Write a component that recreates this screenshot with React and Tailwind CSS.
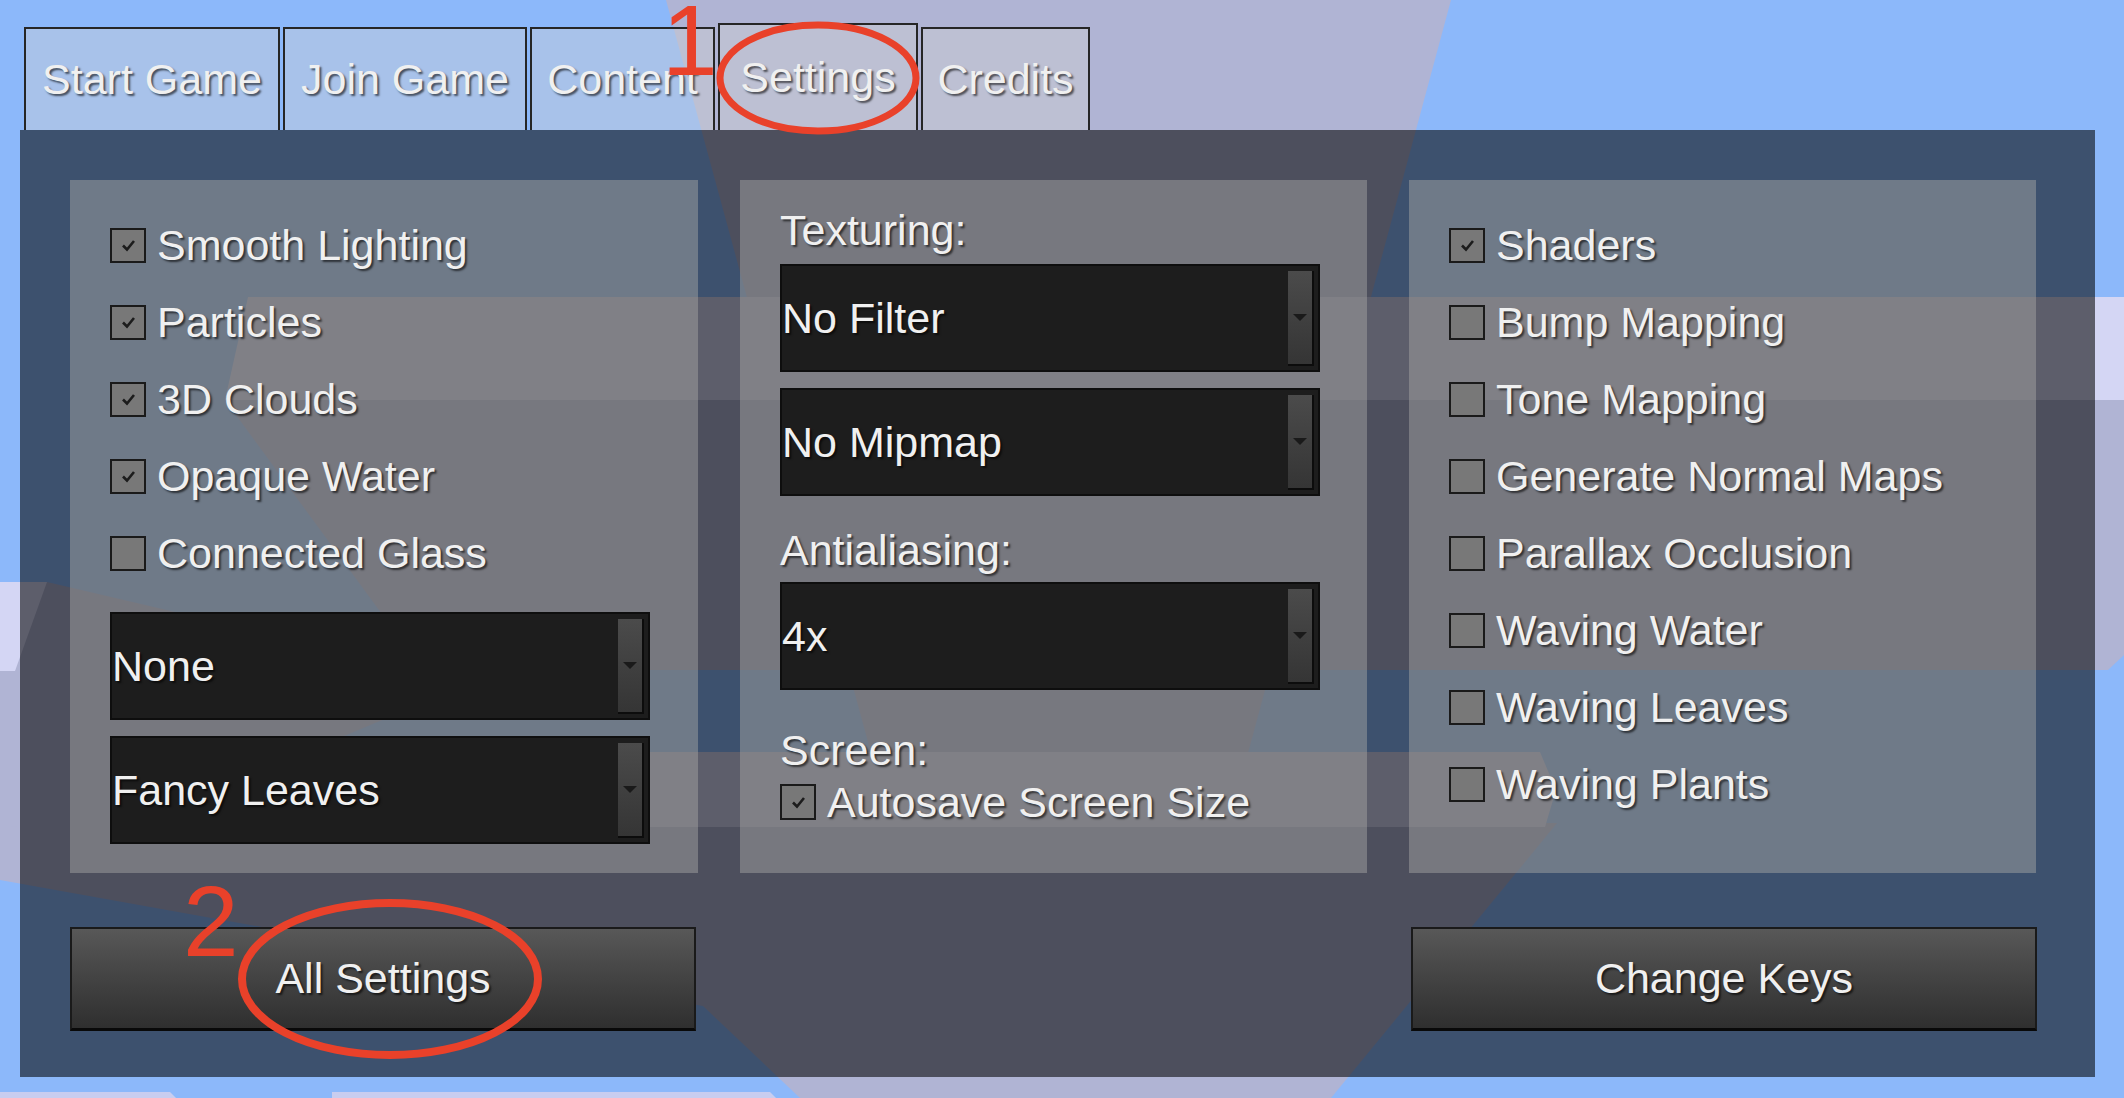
import React from 'react';

const shadow = '[text-shadow:2px_2px_2px_rgba(0,0,0,0.6)]';

const tabs = [
  { label: 'Start Game', w: 'w-[256px]' },
  { label: 'Join Game', w: 'w-[244px]' },
  { label: 'Content', w: 'w-[185px]' },
  { label: 'Settings', w: 'w-[200px]', active: true },
  { label: 'Credits', w: 'w-[169px]' },
];

const leftChecks = [
  { label: 'Smooth Lighting', on: true },
  { label: 'Particles', on: true },
  { label: '3D Clouds', on: true },
  { label: 'Opaque Water', on: true },
  { label: 'Connected Glass', on: false },
];

const rightChecks = [
  { label: 'Shaders', on: true },
  { label: 'Bump Mapping', on: false },
  { label: 'Tone Mapping', on: false },
  { label: 'Generate Normal Maps', on: false },
  { label: 'Parallax Occlusion', on: false },
  { label: 'Waving Water', on: false },
  { label: 'Waving Leaves', on: false },
  { label: 'Waving Plants', on: false },
];

function Backdrop() {
  return (
    <svg className="absolute inset-0" width="2124" height="1098" viewBox="0 0 2124 1098">
      {/* sun beam */}
      <polygon points="666,0 1451,0 1155,1098 965,1098" fill="#b0b4d4" />
      {/* grey clouds */}
      <polygon points="225,400 2124,400 2124,655 2108,670 423,670" fill="#b0b4d4" />
      <polygon points="0,671 47,582 430,672 430,700 0,880" fill="#b0b4d4" />
      <polygon points="0,827 1557,823 1331,1098 800,1098 703,1006 0,880" fill="#b0b4d4" />
      {/* bright clouds */}
      <polygon points="248,297 2124,297 2124,400 225,400" fill="#d4d6f4" />
      <polygon points="0,582 47,582 15,671 0,671" fill="#d4d6f4" />
      <polygon points="440,752 1540,752 1556,790 1545,827 420,827" fill="#d4d6f4" />
      <polygon points="0,1092 170,1092 176,1098 0,1098" fill="#c9cdef" />
      <polygon points="332,1092 770,1092 776,1098 332,1098" fill="#c9cdef" />
    </svg>
  );
}

function Checkbox({ on, big }) {
  return (
    <span
      className={`flex shrink-0 items-center justify-center border-2 border-[#1a1a1a] bg-[#787878] ${
        big ? 'h-[36px] w-[36px]' : 'h-[35px] w-[36px]'
      }`}
    >
      {on && (
        <svg width="15" height="13" viewBox="0 0 15 13">
          <path d="M2 6.5 L6 10.5 L13 2" fill="none" stroke="#1c1c1c" strokeWidth="2.6" />
        </svg>
      )}
    </span>
  );
}

function CheckRow({ label, on }) {
  return (
    <div className="flex h-[77px] items-center gap-[11px]">
      <Checkbox on={on} />
      <span className={shadow}>{label}</span>
    </div>
  );
}

function Dropdown({ value, className = '' }) {
  return (
    <div className={`flex h-[108px] w-[540px] border-2 border-[#0e0e0e] bg-[#1d1d1d] ${className}`}>
      <div className="flex flex-1 items-center">
        <span className={shadow}>{value}</span>
      </div>
      <div className="mb-[4px] mr-[4px] mt-[5px] flex w-[26px] items-center justify-center border-b-2 border-r-2 border-[#0c0c0c] bg-gradient-to-b from-[#4b4b4b] to-[#353535]">
        <svg width="14" height="7" viewBox="0 0 14 7">
          <path d="M0 0 L14 0 L7 7 Z" fill="#1a1a1a" />
        </svg>
      </div>
    </div>
  );
}

function Button({ label }) {
  return (
    <button className="flex h-[104px] w-[626px] items-center justify-center border-2 border-b-[3px] border-[#1a1a1a] border-b-[#090909] bg-gradient-to-b from-[#585858] to-[#2f2f2f]">
      <span className={shadow}>{label}</span>
    </button>
  );
}

export default function App() {
  return (
    <div className="relative h-[1098px] w-[2124px] overflow-hidden bg-[#8cb8fa] text-[43px] text-[#f0f0f0] [font-family:'Liberation_Sans',Arimo,sans-serif]">
      <Backdrop />

      <div className="relative pl-[20px] pt-[23px]">
        {/* Tabs */}
        <div className="ml-[4px] flex h-[107px] items-end gap-[3px]">
          {tabs.map((t) => (
            <div
              key={t.label}
              className={`flex items-center justify-center border-2 border-b-0 border-[#262626] bg-[rgba(210,210,210,0.4)] ${t.w} ${
                t.active ? 'h-[107px]' : 'h-[103px]'
              }`}
            >
              <span className={shadow}>{t.label}</span>
            </div>
          ))}
        </div>

        {/* Panel */}
        <div className="h-[947px] w-[2075px] bg-black/[0.56] pl-[50px] pt-[50px]">
          <div className="flex gap-[42px]">
            {/* Left column */}
            <div className="h-[693px] w-[628px] bg-[rgba(168,168,165,0.47)] px-[40px] pt-[27px]">
              {leftChecks.map((c) => (
                <CheckRow key={c.label} {...c} />
              ))}
              <Dropdown value="None" className="mt-[20px]" />
              <Dropdown value="Fancy Leaves" className="mt-[16px]" />
            </div>

            {/* Middle column */}
            <div className="h-[693px] w-[627px] bg-[rgba(168,168,165,0.47)] px-[40px] pt-[29px]">
              <div className={`leading-[42px] ${shadow}`}>Texturing:</div>
              <Dropdown value="No Filter" className="mt-[13px]" />
              <Dropdown value="No Mipmap" className="mt-[16px]" />
              <div className={`mt-[33px] leading-[42px] ${shadow}`}>Antialiasing:</div>
              <Dropdown value="4x" className="mt-[11px]" />
              <div className={`mt-[39px] leading-[42px] ${shadow}`}>Screen:</div>
              <div className="mt-[13px] flex h-[36px] items-center gap-[11px]">
                <Checkbox on big />
                <span className={shadow}>Autosave Screen Size</span>
              </div>
            </div>

            {/* Right column */}
            <div className="h-[693px] w-[627px] bg-[rgba(168,168,165,0.47)] px-[40px] pt-[27px]">
              {rightChecks.map((c) => (
                <CheckRow key={c.label} {...c} />
              ))}
            </div>
          </div>

          <div className="mt-[54px] flex w-[1967px] justify-between">
            <Button label="All Settings" />
            <Button label="Change Keys" />
          </div>
        </div>
      </div>

      {/* red annotations */}
      <svg className="pointer-events-none absolute inset-0" width="2124" height="1098" viewBox="0 0 2124 1098">
        <ellipse cx="818" cy="78" rx="98" ry="53" fill="none" stroke="#e9412a" strokeWidth="7" />
        <ellipse cx="390" cy="979" rx="148" ry="76" fill="none" stroke="#e9412a" strokeWidth="8" />
        <text x="662" y="75" fontSize="100" fill="#e9412a" fontFamily="Liberation Sans">1</text>
        <text x="183" y="956" fontSize="100" fill="#e9412a" fontFamily="Liberation Sans">2</text>
      </svg>
    </div>
  );
}
